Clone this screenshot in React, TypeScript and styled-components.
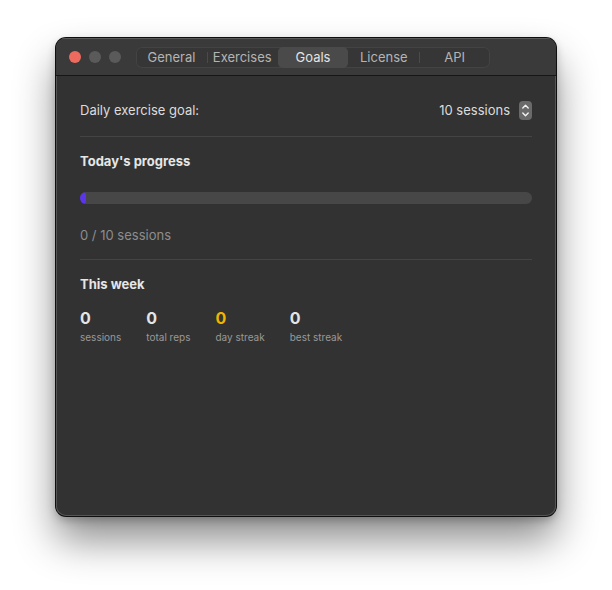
import React from 'react';
import styled, {createGlobalStyle} from 'styled-components';

const GlobalStyle = createGlobalStyle`
    html, body {
        margin: 0;
        padding: 0;
        background: #ffffff;
    }
    body {
        font-family: Inter, "Noto Sans", "Liberation Sans", sans-serif;
        -webkit-font-smoothing: antialiased;
    }
`;

const Page = styled.div`
    width: 612px;
    height: 590px;
    padding: 38px 56px 0 56px;
    box-sizing: border-box;
`;

const Window = styled.div`
    width: 500px;
    height: 478px;
    border-radius: 10px;
    background: #323232;
    box-shadow: 0 0 0 1px #0f0f0f, inset 0 0 0 1px #555, 0 24px 40px rgba(0, 0, 0, 0.45), 0 4px 10px rgba(0, 0, 0, 0.25);
    overflow: hidden;
    display: flex;
    flex-direction: column;
`;

const TitleBar = styled.div`
    height: 37px;
    flex-shrink: 0;
    background: #3a3a3a;
    border-bottom: 1px solid #161616;
    display: flex;
    align-items: center;
    padding-left: 13px;
    box-shadow: inset 0 1px 0 #5a5a5a;
`;

const Lights = styled.div`
    display: flex;
    gap: 8px;
    margin-right: 15px;
`;

const Light = styled.span<{color: string}>`
    width: 12px;
    height: 12px;
    border-radius: 50%;
    background: ${({color}) => color};
`;

const Segmented = styled.div`
    display: flex;
    height: 21px;
    margin-top: 1px;
    border-radius: 6px;
    background: #363636;
    box-shadow: inset 0 0 0 1px #434343;
`;

const Segment = styled.div<{active?: boolean; divider?: boolean}>`
    position: relative;
    width: 70.8px;
    display: flex;
    align-items: center;
    justify-content: center;
    font-size: 13px;
    color: ${({active}) => (active ? '#e4e4e4' : '#b4b4b4')};
    background: ${({active}) => (active ? '#4a4a4a' : 'transparent')};
    border-radius: 5px;
    &::before {
        content: '';
        display: ${({divider}) => (divider ? 'block' : 'none')};
        position: absolute;
        left: 0;
        top: 5px;
        bottom: 5px;
        width: 1px;
        background: #4a4a4a;
    }
`;

const Content = styled.div`
    padding: 24px 24px 0 24px;
    display: flex;
    flex-direction: column;
    color: #dedede;
    font-size: 13px;
`;

const GoalRow = styled.div`
    display: flex;
    align-items: center;
    justify-content: space-between;
    height: 20px;
`;

const Label = styled.span`
    color: #dcdcdc;
`;

const GoalValue = styled.div`
    display: flex;
    align-items: center;
    gap: 9px;
`;

const Stepper = styled.div`
    width: 13px;
    height: 19px;
    border-radius: 4px;
    background: #6a6a6a;
    display: flex;
    align-items: center;
    justify-content: center;
`;

const Divider = styled.div`
    height: 1px;
    background: #444;
    margin: 16px 0;
`;

const SectionTitle = styled.div`
    font-weight: 700;
    font-size: 13px;
    line-height: 16px;
    color: #e6e6e6;
`;

const Track = styled.div`
    margin-top: 23px;
    height: 12px;
    border-radius: 6px;
    background: #474747;
    overflow: hidden;
`;

const Fill = styled.div`
    height: 100%;
    border-radius: 6px;
    background: #5b35ea;
`;

const Caption = styled.div`
    margin-top: 23px;
    line-height: 16px;
    color: #8d8d8d;
`;

const Stats = styled.div`
    display: flex;
    gap: 25px;
    margin-top: 16px;
`;

const Stat = styled.div`
    display: flex;
    flex-direction: column;
`;

const StatValue = styled.div<{accent?: boolean}>`
    font-weight: 700;
    font-size: 16px;
    line-height: 20px;
    color: ${({accent}) => (accent ? '#f0b400' : '#e4e4e4')};
`;

const StatLabel = styled.div`
    font-size: 10px;
    line-height: 14px;
    margin-top: 2px;
    color: #999;
`;

const tabs = ['General', 'Exercises', 'Goals', 'License', 'API'];
const activeTab = 2;

const stats = [
    {value: 0, label: 'sessions'},
    {value: 0, label: 'total reps'},
    {value: 0, label: 'day streak', accent: true},
    {value: 0, label: 'best streak'},
];

function StepperIcon() {
    return (
        <svg width="9" height="15" viewBox="0 0 9 15" fill="none" stroke="#f2f2f2" strokeWidth="1.4" strokeLinecap="round" strokeLinejoin="round">
            <path d="M1.8 5 L4.5 2.3 L7.2 5" />
            <path d="M1.8 10 L4.5 12.7 L7.2 10" />
        </svg>
    );
}

export default function App() {
    const done = 0;
    const goal = 10;
    const pct = Math.max((done / goal) * 100, 1.3);

    return (
        <Page>
            <GlobalStyle />
            <Window>
                <TitleBar>
                    <Lights>
                        <Light color="#ec6a5e" />
                        <Light color="#5a5a5a" />
                        <Light color="#5a5a5a" />
                    </Lights>
                    <Segmented>
                        {tabs.map((t, i) => (
                            <Segment
                                key={t}
                                active={i === activeTab}
                                divider={i > 0 && i !== activeTab && i - 1 !== activeTab}
                            >
                                {t}
                            </Segment>
                        ))}
                    </Segmented>
                </TitleBar>
                <Content>
                    <GoalRow>
                        <Label>Daily exercise goal:</Label>
                        <GoalValue>
                            <Label>{goal} sessions</Label>
                            <Stepper>
                                <StepperIcon />
                            </Stepper>
                        </GoalValue>
                    </GoalRow>
                    <Divider />
                    <SectionTitle>Today's progress</SectionTitle>
                    <Track>
                        <Fill style={{width: `${pct}%`}} />
                    </Track>
                    <Caption>{done} / {goal} sessions</Caption>
                    <Divider />
                    <SectionTitle>This week</SectionTitle>
                    <Stats>
                        {stats.map((s) => (
                            <Stat key={s.label}>
                                <StatValue accent={s.accent}>{s.value}</StatValue>
                                <StatLabel>{s.label}</StatLabel>
                            </Stat>
                        ))}
                    </Stats>
                </Content>
            </Window>
        </Page>
    );
}
